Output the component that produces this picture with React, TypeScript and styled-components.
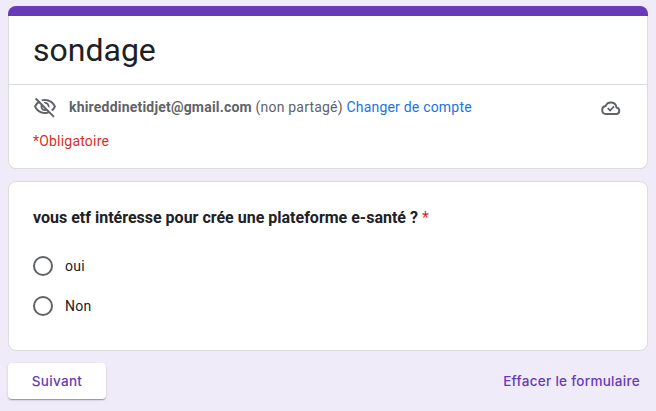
import React from "react";
import styled, { createGlobalStyle } from "styled-components";

const Global = createGlobalStyle`
  *{box-sizing:border-box}
  body{margin:0;background:#f0ebf8;font-family:Roboto,Arial,sans-serif;color:#202124;overflow:hidden}
`;
const Page = styled.main`
  width:656px;height:411px;padding:6px 8px 0;display:flex;flex-direction:column;gap:12px;
`;
const HeaderCard = styled.section`
  height:163px;display:flex;flex-direction:column;
`;
const Accent = styled.div`
  height:10px;flex:none;background:#673ab7;border-radius:8px 8px 0 0;
`;
const HeaderBody = styled.div`
  flex:1;background:#fff;border:1px solid #dadce0;border-top:0;border-radius:0 0 8px 8px;
`;
const Title = styled.h1`
  margin:0;height:69px;padding:13px 24px 0;border-bottom:1px solid #dadce0;
  font-size:32px;line-height:43px;font-weight:400;
`;
const Account = styled.div`
  display:flex;align-items:center;height:44px;padding:0 24px;color:#5f6368;font-size:14px;letter-spacing:.2px;
  & > svg{flex:none}
`;
const CloudIcon = styled.svg`
  margin:2px 2px 0 0;
`;
const AccountText = styled.div`
  flex:1;margin-left:12px;white-space:nowrap;
  b{font-weight:700}
  a{color:#1a73e8}
`;
const Required = styled.div`
  padding:2px 24px;color:#d93025;font-size:14px;line-height:20px;letter-spacing:.2px;
`;
const QuestionCard = styled.section`
  height:170px;padding:24px;background:#fff;border:1px solid #dadce0;border-radius:8px;
`;
const Question = styled.h2`
  margin:0 0 16px;font-size:16px;line-height:24px;font-weight:700;
  span{color:#d93025;font-weight:400}
`;
const Option = styled.label`
  display:flex;align-items:center;gap:12px;height:40px;font-size:14px;letter-spacing:.3px;
`;
const Radio = styled.span`
  width:20px;height:20px;border:2px solid #5f6368;border-radius:50%;
`;
const Actions = styled.div`
  display:flex;justify-content:space-between;align-items:center;height:36px;padding-right:8px;
`;
const TextButton = styled.button`
  border:0;background:none;padding:0;color:#673ab7;
  font:500 13.5px Inter,sans-serif;letter-spacing:.3px;
`;
const Next = styled(TextButton)`
  width:98px;height:36px;border-radius:4px;background:#fff;
  box-shadow:0 2px 1px -1px rgba(0,0,0,.2),0 1px 1px rgba(0,0,0,.14),0 1px 3px rgba(0,0,0,.12);
`;

export default function App() {
  return (
    <>
      <Global />
      <Page>
        <HeaderCard>
          <Accent />
          <HeaderBody>
            <Title>sondage</Title>
            <Account>
              <svg width="24" height="24" viewBox="0 0 24 24" fill="#5f6368"><path d="M10.58,7.25l1.56,1.56c1.38,0.07,2.47,1.17,2.54,2.54l1.56,1.56C16.4,12.47,16.5,12,16.5,11.5C16.5,9.02,14.48,7,12,7 C11.5,7,11.03,7.1,10.58,7.25z M12,6c3.79,0,7.17,2.13,8.82,5.5c-0.64,1.32-1.56,2.44-2.66,3.33l1.42,1.42c1.51-1.26,2.7-2.89,3.43-4.74 C21.27,7.11,17,4,12,4c-1.4,0-2.73,0.25-3.98,0.7L9.63,6.3C10.4,6.12,11.19,6,12,6z M16.43,15.93l-1.25-1.25l-1.27-1.27l-3.82-3.82 L8.82,8.32L7.57,7.07L6.09,5.59L3.31,2.81L1.89,4.22l2.53,2.53C2.92,8.02,1.73,9.64,1,11.5C2.73,15.89,7,19,12,19 c1.4,0,2.73-0.25,3.98-0.7l4.3,4.3l1.41-1.41l-3.78-3.78L16.43,15.93z M11.86,14.19c-1.38-0.07-2.47-1.17-2.54-2.54L11.86,14.19z M12,17c-3.79,0-7.17-2.13-8.82-5.5c0.64-1.32,1.56-2.44,2.66-3.33l1.91,1.91C7.6,10.53,7.5,11,7.5,11.5c0,2.48,2.02,4.5,4.5,4.5 c0.5,0,0.97-0.1,1.42-0.25l0.95,0.95C13.6,16.88,12.81,17,12,17z" /></svg>
              <AccountText><b>khireddinetidjet@gmail.com</b> (non partagé) <a>Changer de compte</a></AccountText>
              <CloudIcon width="20" height="14" viewBox="0 0 20 14" fill="none" stroke="#5f6368">
                <path d="M5 13a4 4 0 0 1-.4-7.95A5.6 5.6 0 0 1 15.4 6.5 3.3 3.3 0 0 1 15.7 13Z" strokeWidth="1.9" strokeLinejoin="round" />
                <path d="M6.7 7.2 9.1 9.5 13 5.4" strokeWidth="1.8" />
              </CloudIcon>
            </Account>
            <Required>*Obligatoire</Required>
          </HeaderBody>
        </HeaderCard>
        <QuestionCard>
          <Question>vous etf intéresse pour crée une plateforme e-santé ? <span>*</span></Question>
          <Option><Radio />oui</Option>
          <Option><Radio />Non</Option>
        </QuestionCard>
        <Actions><Next>Suivant</Next><TextButton>Effacer le formulaire</TextButton></Actions>
      </Page>
    </>
  );
}
